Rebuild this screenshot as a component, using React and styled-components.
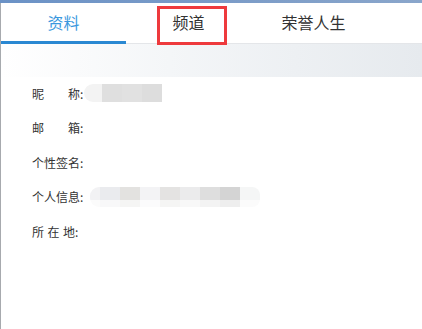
import styled, { createGlobalStyle } from "styled-components";

const GlobalStyle = createGlobalStyle`
  html, body {
    margin: 0;
    padding: 0;
    background: #ffffff;
  }
  body {
    font-family: "Noto Sans CJK SC", "Noto Sans", sans-serif;
    color: #333;
  }
`;

const Window = styled.div`
  width: 422px;
  height: 329px;
  display: flex;
  flex-direction: column;
  overflow: hidden;
  background: #fff;
`;

const TopStrip = styled.div`
  height: 3px;
  flex: none;
  background: linear-gradient(to right, #6b92c6, #7d9dc8 60%, #8aa6cb);
`;

const Body = styled.div`
  flex: 1;
  display: flex;
  flex-direction: column;
  border-left: 1px solid #a7aaae;
`;

const TabBar = styled.div`
  display: flex;
  height: 40px;
  border-bottom: 1px solid #e4e6e9;
  flex: none;
`;

const Tab = styled.div`
  position: relative;
  width: 125px;
  display: flex;
  align-items: center;
  justify-content: center;
  font-size: 16px;
  padding-bottom: 2px;
  box-sizing: border-box;
  color: ${(p) => (p.$active ? "#3a98de" : "#333")};

  &::after {
    content: "";
    display: ${(p) => (p.$active ? "block" : "none")};
    position: absolute;
    left: 0;
    right: 0;
    bottom: -1px;
    height: 3px;
    background: #2a88d2;
  }
`;

const Highlight = styled.div`
  position: absolute;
  left: 31px;
  top: 3px;
  width: 70px;
  height: 39px;
  box-sizing: border-box;
  border: 3px solid #ee3a3d;
  pointer-events: none;
`;

const Form = styled.div`
  flex: 1;
  padding: 32px 0 0 31px;
  background: linear-gradient(to right, #ffffff 0%, #f4f6f8 40%, #e6eaee 100%) top left / 100% 33px no-repeat;
`;

const Row = styled.div`
  height: 34.5px;
  display: flex;
  align-items: center;
  font-size: 12px;
  color: #333;
`;

const Label = styled.div`
  display: flex;
  justify-content: ${(p) => (p.$justify ? "space-between" : "flex-start")};
  gap: ${(p) => (p.$justify ? "0" : "3.5px")};
  width: ${(p) => (p.$justify ? "48px" : "auto")};
`;

const Colon = styled.span`
  margin-right: ${(p) => p.$gap || 0}px;
`;

const Mosaic = styled.div`
  display: flex;
  flex-direction: column;
  height: ${(p) => p.$height}px;
  border-radius: ${(p) => p.$radius};
  overflow: hidden;
`;

const MosaicLine = styled.div`
  display: flex;
  flex: ${(p) => p.$grow};
`;

const Cell = styled.div`
  width: ${(p) => p.$w}px;
  background: ${(p) => p.$c};
`;

const nickTop = [
  [18, "#f3f3f3"],
  [20, "#dfdfdf"],
  [20, "#e1e1e1"],
  [20, "#dddddd"],
];

const infoTop = [
  [10, "#f2f2f4"],
  [20, "#eaebee"],
  [20, "#e3e2e0"],
  [20, "#f3f3f5"],
  [20, "#e4e3e2"],
  [20, "#ebebec"],
  [20, "#dedede"],
  [20, "#d4d4d4"],
  [20, "#f5f6f6"],
];

const infoBottom = [
  [10, "#fbfbfb"],
  [20, "#f8f8f9"],
  [20, "#f5f5f4"],
  [20, "#fbfbfc"],
  [20, "#f5f5f4"],
  [20, "#f8f8f8"],
  [20, "#f3f3f3"],
  [20, "#eeeeee"],
  [20, "#fbfbfb"],
];

function Blur({ lines, height, radius }) {
  return (
    <Mosaic $height={height} $radius={radius}>
      {lines.map((line, i) => (
        <MosaicLine key={i} $grow={line.grow}>
          {line.cells.map(([w, c], j) => (
            <Cell key={j} $w={w} $c={c} />
          ))}
        </MosaicLine>
      ))}
    </Mosaic>
  );
}

const rows = [
  {
    chars: ["昵", "称"],
    justify: true,
    gap: 1,
    blur: { height: 18, radius: "9px 0 0 9px", lines: [{ grow: 1, cells: nickTop }] },
  },
  { chars: ["邮", "箱"], justify: true },
  { chars: ["个", "性", "签", "名"], justify: true },
  {
    chars: ["个", "人", "信", "息"],
    justify: true,
    gap: 7,
    blur: {
      height: 20,
      radius: "9px 8px 8px 9px",
      lines: [{ grow: 13, cells: infoTop }, { grow: 7, cells: infoBottom }],
    },
  },
  { chars: ["所", "在", "地"], justify: false },
];

export default function App() {
  return (
    <>
      <GlobalStyle />
      <Window>
        <TopStrip />
        <Body>
          <TabBar>
            <Tab $active>资料</Tab>
            <Tab>
              频道
              <Highlight />
            </Tab>
            <Tab>荣誉人生</Tab>
          </TabBar>
          <Form>
            {rows.map((r, i) => (
              <Row key={i}>
                <Label $justify={r.justify}>
                  {r.chars.map((c) => (
                    <span key={c}>{c}</span>
                  ))}
                </Label>
                <Colon $gap={r.gap}>:</Colon>
                {r.blur && <Blur {...r.blur} />}
              </Row>
            ))}
          </Form>
        </Body>
      </Window>
    </>
  );
}
